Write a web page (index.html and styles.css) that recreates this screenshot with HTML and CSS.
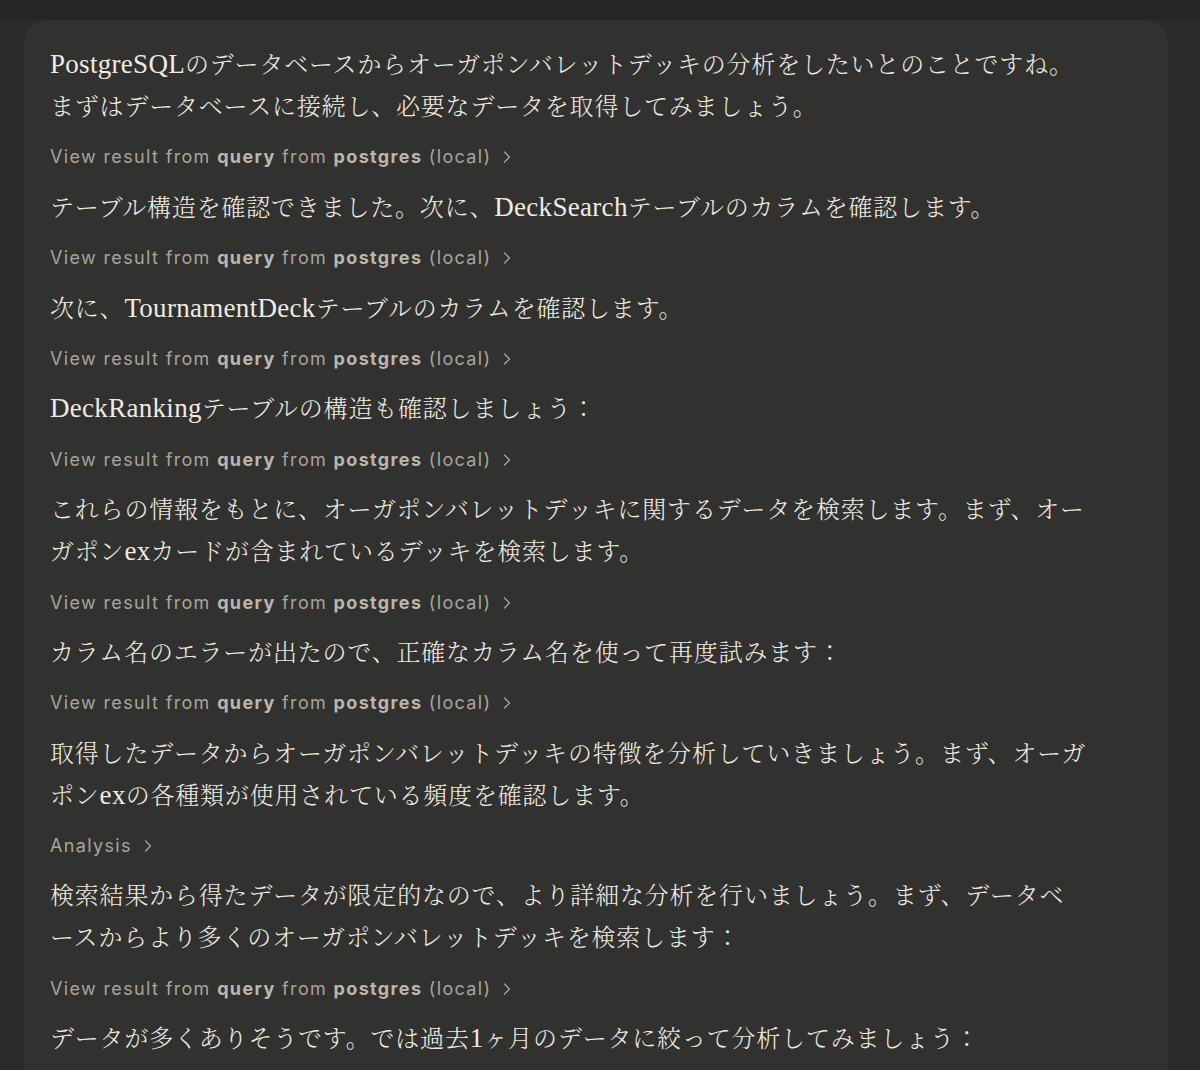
FILE: index.html
```html
<!DOCTYPE html>
<html lang="ja">
<head>
<meta charset="utf-8">
<link rel="stylesheet" href="styles.css">
</head>
<body>
<div class="page">
  <div class="card">
    <p class="msg"><span class="en">PostgreSQL</span>のデータベースからオーガポンバレットデッキの分析をしたいとのことですね。<br>まずはデータベースに接続し、必要なデータを取得してみましょう。</p>
    <div class="tool">View result from <b>query</b> from <b>postgres</b> (local)<svg class="chev" width="8" height="12" viewBox="0 0 8 12"><path d="M1.5 1 L6.5 6 L1.5 11" fill="none" stroke="currentColor" stroke-width="1.3" stroke-linecap="round" stroke-linejoin="round"/></svg></div>
    <p class="msg">テーブル構造を確認できました。次に、<span class="en">DeckSearch</span>テーブルのカラムを確認します。</p>
    <div class="tool">View result from <b>query</b> from <b>postgres</b> (local)<svg class="chev" width="8" height="12" viewBox="0 0 8 12"><path d="M1.5 1 L6.5 6 L1.5 11" fill="none" stroke="currentColor" stroke-width="1.3" stroke-linecap="round" stroke-linejoin="round"/></svg></div>
    <p class="msg">次に、<span class="en">TournamentDeck</span>テーブルのカラムを確認します。</p>
    <div class="tool">View result from <b>query</b> from <b>postgres</b> (local)<svg class="chev" width="8" height="12" viewBox="0 0 8 12"><path d="M1.5 1 L6.5 6 L1.5 11" fill="none" stroke="currentColor" stroke-width="1.3" stroke-linecap="round" stroke-linejoin="round"/></svg></div>
    <p class="msg"><span class="en">DeckRanking</span>テーブルの構造も確認しましょう：</p>
    <div class="tool">View result from <b>query</b> from <b>postgres</b> (local)<svg class="chev" width="8" height="12" viewBox="0 0 8 12"><path d="M1.5 1 L6.5 6 L1.5 11" fill="none" stroke="currentColor" stroke-width="1.3" stroke-linecap="round" stroke-linejoin="round"/></svg></div>
    <p class="msg">これらの情報をもとに、オーガポンバレットデッキに関するデータを検索します。まず、オー<br>ガポン<span class="en">ex</span>カードが含まれているデッキを検索します。</p>
    <div class="tool">View result from <b>query</b> from <b>postgres</b> (local)<svg class="chev" width="8" height="12" viewBox="0 0 8 12"><path d="M1.5 1 L6.5 6 L1.5 11" fill="none" stroke="currentColor" stroke-width="1.3" stroke-linecap="round" stroke-linejoin="round"/></svg></div>
    <p class="msg">カラム名のエラーが出たので、正確なカラム名を使って再度試みます：</p>
    <div class="tool">View result from <b>query</b> from <b>postgres</b> (local)<svg class="chev" width="8" height="12" viewBox="0 0 8 12"><path d="M1.5 1 L6.5 6 L1.5 11" fill="none" stroke="currentColor" stroke-width="1.3" stroke-linecap="round" stroke-linejoin="round"/></svg></div>
    <p class="msg">取得したデータからオーガポンバレットデッキの特徴を分析していきましょう。まず、オーガ<br>ポン<span class="en">ex</span>の各種類が使用されている頻度を確認します。</p>
    <div class="tool">Analysis<svg class="chev" width="8" height="12" viewBox="0 0 8 12"><path d="M1.5 1 L6.5 6 L1.5 11" fill="none" stroke="currentColor" stroke-width="1.3" stroke-linecap="round" stroke-linejoin="round"/></svg></div>
    <p class="msg">検索結果から得たデータが限定的なので、より詳細な分析を行いましょう。まず、データベ<br>ースからより多くのオーガポンバレットデッキを検索します：</p>
    <div class="tool">View result from <b>query</b> from <b>postgres</b> (local)<svg class="chev" width="8" height="12" viewBox="0 0 8 12"><path d="M1.5 1 L6.5 6 L1.5 11" fill="none" stroke="currentColor" stroke-width="1.3" stroke-linecap="round" stroke-linejoin="round"/></svg></div>
    <p class="msg">データが多くありそうです。では過去<span class="en">1</span>ヶ月のデータに絞って分析してみましょう：</p>
  </div>
</div>
</body>
</html>
```

FILE: styles.css
```css
html, body {
  margin: 0;
  padding: 0;
}
body {
  background: #262624;
  height: 1070px;
  overflow: hidden;
}
.page {
  display: flex;
  padding: 0 32px 0 24px;
  background: #2a2a28;
  border-top: 20px solid #262624;
}
.card {
  width: 1144px;
  min-height: 1200px;
  box-sizing: border-box;
  background: #31312f;
  border-radius: 24px 24px 0 0;
  padding: 24px 26px 0 26px;
  display: flex;
  flex-direction: column;
  gap: 15.4px;
}
.msg {
  margin: 0;
  font-family: "Liberation Serif", "Noto Serif CJK JP", "Noto Sans CJK JP", serif;
  font-size: 24px;
  letter-spacing: 0.8px;
  line-height: 42px;
  color: #eeebe2;
  font-weight: 300;
}
.msg .en {
  font-size: 27px;
  line-height: 1;
  letter-spacing: 0.3px;
  font-weight: 400;
}
.tool {
  display: flex;
  align-items: center;
  font-family: Inter, "Noto Sans", sans-serif;
  font-size: 18px;
  letter-spacing: 1.35px;
  line-height: 28px;
  color: #a8a59c;
  white-space: pre;
}
.tool b {
  font-weight: 700;
  color: #bab7ae;
}
.chev {
  margin-left: 12px;
  color: #a8a59c;
}
```
